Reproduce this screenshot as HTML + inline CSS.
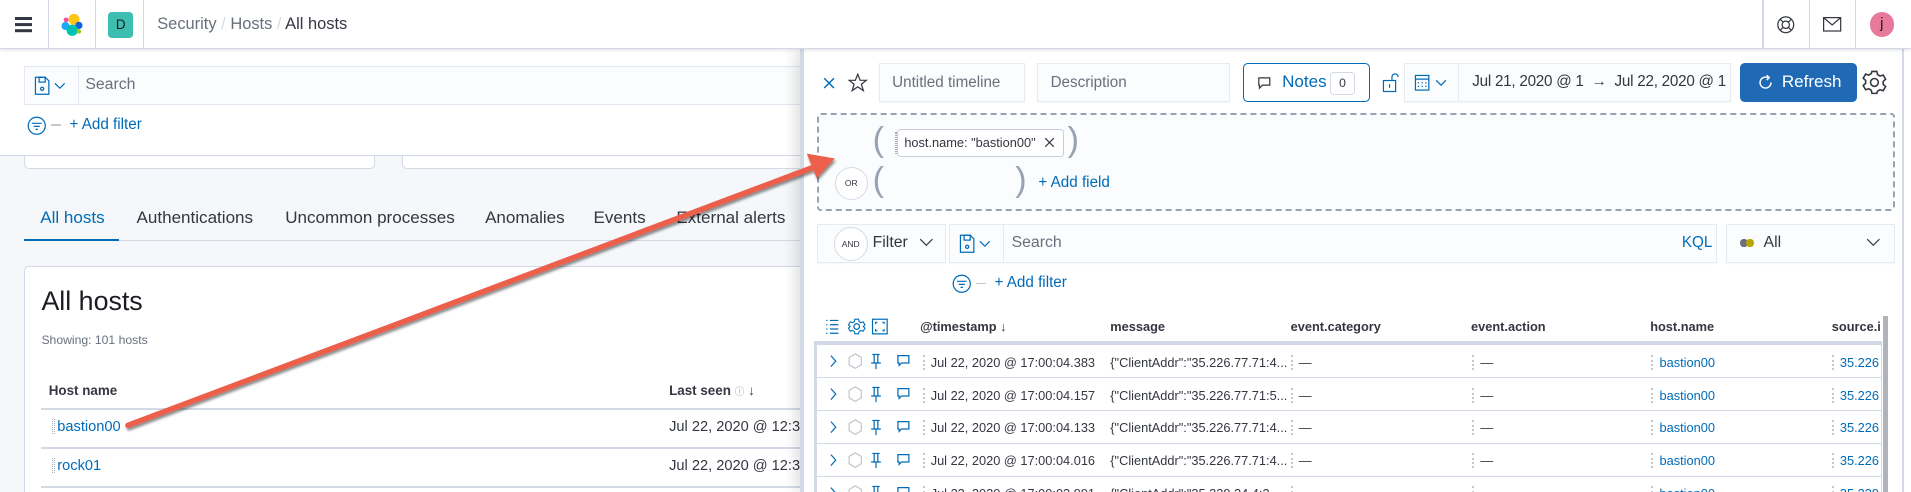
<!DOCTYPE html>
<html><head><meta charset="utf-8"><style>
*{box-sizing:border-box;margin:0;padding:0}
html,body{width:1911px;height:492px;overflow:hidden;background:#fafbfd}
#root{zoom:1.21875;width:1568px;height:404px;position:relative;overflow:hidden;font-family:"Liberation Sans",Arial,sans-serif;color:#343741;background:#f5f7fa}
.a{position:absolute;white-space:nowrap}
.blue{color:#006bb8}
.hdr{left:0;top:0;width:1568px;height:40px;background:#fff;border-bottom:1px solid #d3dae6;box-shadow:0 1px 3px rgba(0,0,0,.12);z-index:5}
.vl{position:absolute;top:0;width:1px;height:40px;background:#d3dae6}
.inp{position:absolute;background:#fbfcfd;border:1px solid #e6eaf1;box-shadow:0 1px 1px rgba(0,0,0,.04)}
.row{position:absolute;left:670px;width:873px;height:27px;border-bottom:1px solid #d3dae6;font-size:10.5px;background:#fff}
.row span{position:absolute;top:8px}
.row .h{padding-left:5px;border-left:2px dotted #c2c7cf}
.row svg{position:absolute;left:8px;top:6px}
.hd{position:absolute;left:1px;top:0;width:2px;height:12px;border-left:1px dotted #aab;border-right:1px dotted #aab}
</style></head><body><div id="root">

<!-- left page -->
<div class="a" style="left:0;top:40px;width:657px;height:88px;background:#fff;border-bottom:1px solid #d3dae6"></div>
<div class="a" style="left:20px;top:54px;width:640px;height:32px;background:#fbfcfd;border:1px solid #e3e8f2"></div>
<div class="a" style="left:64px;top:54px;width:1px;height:32px;background:#e3e8f2"></div>
<svg class="a" style="left:27px;top:62px" width="30" height="16" viewBox="0 0 30 16"><path d="M2 1h8l3 3v11H2z" fill="none" stroke="#006bb8"/><rect x="5" y="1" width="5" height="4" fill="none" stroke="#006bb8"/><circle cx="7.5" cy="10.5" r="1.3" fill="none" stroke="#006bb8"/><path d="M18 6l4 4 4-4" fill="none" stroke="#006bb8"/></svg>
<div class="a" style="left:70px;top:62px;font-size:13px;color:#69707d">Search</div>
<svg class="a" style="left:22px;top:95px" width="16" height="16"><circle cx="8" cy="8" r="7" fill="none" stroke="#006bb8"/><path d="M4 6h8M5.5 8.5h5M7 11h2" stroke="#006bb8"/></svg>
<div class="a" style="left:42px;top:102px;width:8px;height:1px;background:#c2c7cf"></div>
<div class="a blue" style="left:57px;top:95px;font-size:12.5px">+ Add filter</div>
<div class="a" style="left:20px;top:128px;width:288px;height:11px;background:#fff;border:1px solid #d3dae6;border-top:none;border-radius:0 0 4px 4px"></div>
<div class="a" style="left:330px;top:128px;width:340px;height:11px;background:#fff;border:1px solid #d3dae6;border-top:none;border-radius:0 0 4px 4px"></div>
<div class="a" style="left:20px;top:197px;width:650px;height:1px;background:#d3dae6"></div>
<div class="a" style="left:20px;top:196px;width:78px;height:2px;background:#006bb8"></div>
<div class="a blue" style="left:33px;top:171px;font-size:14px">All hosts</div>
<div class="a" style="left:112px;top:171px;font-size:14px">Authentications</div>
<div class="a" style="left:234px;top:171px;font-size:14px">Uncommon processes</div>
<div class="a" style="left:398px;top:171px;font-size:14px">Anomalies</div>
<div class="a" style="left:487px;top:171px;font-size:14px">Events</div>
<div class="a" style="left:555px;top:171px;font-size:14px">External alerts</div>
<div class="a" style="left:20px;top:218px;width:660px;height:200px;background:#fff;border:1px solid #d3dae6;border-radius:4px"></div>
<div class="a" style="left:34px;top:235px;font-size:22px;color:#1a1c21">All hosts</div>
<div class="a" style="left:34px;top:273px;font-size:10px;color:#69707d">Showing: 101 hosts</div>
<div class="a" style="left:40px;top:314px;font-size:11px;font-weight:bold">Host name</div>
<div class="a" style="left:549px;top:314px;font-size:11px;font-weight:bold">Last seen <span style="font-size:8px;color:#98a2b3;font-weight:normal">ⓘ</span> <span style="font-weight:normal">↓</span></div>
<div class="a" style="left:34px;top:335px;width:640px;height:1px;background:#d3dae6"></div>
<div class="a" style="left:34px;top:367px;width:640px;height:1px;background:#d3dae6"></div>
<div class="a" style="left:34px;top:399px;width:640px;height:1px;background:#d3dae6"></div>
<div class="a" style="left:42px;top:344px"><div class="hd"></div></div>
<div class="a blue" style="left:47px;top:344px;font-size:12px">bastion00</div>
<div class="a" style="left:42px;top:376px"><div class="hd"></div></div>
<div class="a blue" style="left:47px;top:376px;font-size:12px">rock01</div>
<div class="a" style="left:549px;top:344px;font-size:12px">Jul 22, 2020 @ 12:3</div>
<div class="a" style="left:549px;top:376px;font-size:12px">Jul 22, 2020 @ 12:3</div>

<!-- flyout -->
<div class="a" style="left:656px;top:40px;width:912px;height:364px;background:#fff;border-left:4px solid #d3dae6;box-shadow:-4px 0 10px rgba(0,0,0,.12);z-index:1"></div>
<div class="a" style="left:1561px;top:40px;width:1px;height:364px;background:#d3dae6;z-index:2"></div>
<div style="position:absolute;left:0;top:0;width:1568px;height:404px;z-index:3">
<svg class="a" style="left:675px;top:63px" width="10" height="10"><path d="M1 1l8 8M9 1l-8 8" stroke="#006bb8" stroke-width="1.2"/></svg>
<svg class="a" style="left:696px;top:60px" width="16" height="16"><path d="M8 1l2 5h5l-4 3.2 1.6 5.3L8 11.4 3.4 14.5 5 9.2 1 6h5z" fill="none" stroke="#343741"/></svg>
<div class="inp" style="left:721px;top:52px;width:120px;height:32px"></div>
<div class="a" style="left:732px;top:61px;font-size:12.5px;color:#69707d">Untitled timeline</div>
<div class="inp" style="left:851px;top:52px;width:158px;height:32px"></div>
<div class="a" style="left:862px;top:61px;font-size:12.5px;color:#69707d">Description</div>
<div class="a" style="left:1020px;top:52px;width:104px;height:32px;border:1px solid #006bb8;border-radius:4px;background:#fff"></div>
<svg class="a" style="left:1031px;top:62px" width="12" height="12"><path d="M1.5 1.5h9v6h-6l-2.5 2.5v-2.5h-.5z" fill="none" stroke="#343741"/></svg>
<div class="a blue" style="left:1052px;top:59px;font-size:14px">Notes</div>
<div class="a" style="left:1091px;top:59px;width:21px;height:19px;border:1px solid #d3dae6;border-radius:3px;font-size:10px;text-align:center;line-height:17px">0</div>
<svg class="a" style="left:1133px;top:59px" width="16" height="18"><rect x="2" y="7" width="10" height="9" fill="none" stroke="#006bb8"/><path d="M9 7V4a2.5 2.5 0 0 1 5 0" fill="none" stroke="#006bb8"/><path d="M7 10v3" stroke="#006bb8"/></svg>
<div class="inp" style="left:1152px;top:52px;width:268px;height:32px"></div>
<div class="a" style="left:1196px;top:52px;width:1px;height:32px;background:#e6eaf1"></div>
<svg class="a" style="left:1159px;top:60px" width="32" height="16"><rect x="2" y="2" width="11" height="12" fill="none" stroke="#006bb8"/><path d="M2 5h11M4 8h1M7 8h1M10 8h1M4 11h1M7 11h1M10 11h1" stroke="#006bb8"/><path d="M19 6l4 4 4-4" fill="none" stroke="#006bb8"/></svg>
<div class="a" style="left:1208px;top:60px;font-size:12.5px;letter-spacing:-.2px">Jul 21, 2020 @ 1 &nbsp;→ &nbsp;Jul 22, 2020 @ 1</div>
<div class="a" style="left:1428px;top:52px;width:96px;height:32px;background:#1f69b5;border-radius:4px"></div>
<svg class="a" style="left:1442px;top:61px" width="14" height="14"><path d="M11.5 7A4.5 4.5 0 1 1 9 3" fill="none" stroke="#fff" stroke-width="1.2"/><path d="M8 1l2 2-2 2" fill="none" stroke="#fff" stroke-width="1.2"/></svg>
<div class="a" style="left:1462px;top:59px;font-size:14px;color:#fff">Refresh</div>
<svg class="a" style="left:1527px;top:57px" width="22" height="22" viewBox="0 0 22 22"><path d="M9 2h4l.6 2.6 2 1.2 2.6-.8 2 3.4-2 1.8v2.4l2 1.8-2 3.4-2.6-.8-2 1.2L13 20H9l-.6-2.6-2-1.2-2.6.8-2-3.4 2-1.8V9.4l-2-1.8 2-3.4 2.6.8 2-1.2z" fill="none" stroke="#343741" stroke-width="1.3"/><circle cx="11" cy="11" r="3.2" fill="none" stroke="#343741" stroke-width="1.3"/></svg>

<div class="a" style="left:670px;top:93px;width:885px;height:80px;border:2px dashed #98a2b3;background:#fbfcfd;border-radius:3px"></div>
<div class="a" style="left:716px;top:99px;font-size:28px;color:#98a2b3;font-weight:100">(</div>
<div class="a" style="left:736px;top:106px;width:137px;height:23px;border:1px solid #c7cdd8;border-radius:3px;background:#fff"></div>
<div class="a" style="left:733px;top:108px"><div class="hd" style="height:18px"></div></div>
<div class="a" style="left:742px;top:111px;font-size:10.5px">host.name: "bastion00"</div>
<svg class="a" style="left:857px;top:112px" width="9" height="9"><path d="M1 1l7 7M8 1l-7 7" stroke="#343741"/></svg>
<div class="a" style="left:876px;top:99px;font-size:28px;color:#98a2b3">)</div>
<div class="a" style="left:685px;top:137px;width:27px;height:27px;border:1px solid #d3dae6;border-radius:50%;background:#fff;font-size:7px;text-align:center;line-height:26px">OR</div>
<div class="a" style="left:716px;top:132px;font-size:28px;color:#98a2b3">(</div>
<div class="a" style="left:833px;top:132px;font-size:28px;color:#98a2b3">)</div>
<div class="a blue" style="left:852px;top:143px;font-size:12.5px">+ Add field</div>

<div class="inp" style="left:670px;top:184px;width:106px;height:32px"></div>
<div class="a" style="left:684px;top:186px;width:28px;height:28px;border:1px solid #d3dae6;border-radius:50%;background:#fff;font-size:7px;text-align:center;line-height:27px">AND</div>
<div class="a" style="left:716px;top:192px;font-size:13px">Filter</div>
<svg class="a" style="left:754px;top:195px" width="12" height="8"><path d="M1 1l5 5 5-5" fill="none" stroke="#343741"/></svg>
<div class="inp" style="left:779px;top:184px;width:630px;height:32px"></div>
<div class="a" style="left:823px;top:184px;width:1px;height:32px;background:#e6eaf1"></div>
<svg class="a" style="left:786px;top:192px" width="30" height="16"><path d="M2 1h8l3 3v11H2z" fill="none" stroke="#006bb8"/><rect x="5" y="1" width="5" height="4" fill="none" stroke="#006bb8"/><circle cx="7.5" cy="10.5" r="1.3" fill="none" stroke="#006bb8"/><path d="M18 6l4 4 4-4" fill="none" stroke="#006bb8"/></svg>
<div class="a" style="left:830px;top:192px;font-size:13px;color:#69707d">Search</div>
<div class="a blue" style="left:1380px;top:192px;font-size:12.5px">KQL</div>
<div class="inp" style="left:1416px;top:184px;width:139px;height:32px"></div>
<div class="a" style="left:1428px;top:196px;width:6px;height:7px;border-radius:50%;background:#69707d"></div>
<div class="a" style="left:1433px;top:196px;width:6px;height:7px;border-radius:50%;background:#b9a500"></div>
<div class="a" style="left:1447px;top:192px;font-size:13px">All</div>
<svg class="a" style="left:1531px;top:195px" width="12" height="8"><path d="M1 1l5 5 5-5" fill="none" stroke="#343741"/></svg>
<svg class="a" style="left:781px;top:225px" width="16" height="16"><circle cx="8" cy="8" r="7" fill="none" stroke="#006bb8"/><path d="M4 6h8M5.5 8.5h5M7 11h2" stroke="#006bb8"/></svg>
<div class="a" style="left:801px;top:232px;width:8px;height:1px;background:#c2c7cf"></div>
<div class="a blue" style="left:816px;top:225px;font-size:12.5px">+ Add filter</div>

<!-- table -->
<svg class="a" style="left:677px;top:261px" width="54" height="14"><path d="M1 2h1M4 2h7M1 5.5h1M4 5.5h7M1 9h1M4 9h7M1 12.5h1M4 12.5h7" stroke="#006bb8"/><circle cx="26" cy="7" r="2.3" fill="none" stroke="#006bb8"/><path d="M24.5 1h3l.4 1.8 1.6 1 1.8-.6 1.5 2.5-1.4 1.3 1.4 1.3-1.5 2.5-1.8-.6-1.6 1-.4 1.8h-3l-.4-1.8-1.6-1-1.8.6-1.5-2.5 1.4-1.3-1.4-1.3 1.5-2.5 1.8.6 1.6-1z" fill="none" stroke="#006bb8" stroke-width=".9"/><rect x="39" y="1" width="12" height="12" fill="none" stroke="#006bb8"/><path d="M41.5 5V3.5H43M47 3.5h1.5V5M48.5 9v1.5H47M43 10.5h-1.5V9" fill="none" stroke="#006bb8" stroke-width=".9"/></svg>
<div class="a" style="left:755px;top:262px;font-size:10.5px;font-weight:bold">@timestamp <span style="font-weight:normal">↓</span></div>
<div class="a" style="left:911px;top:262px;font-size:10.5px;font-weight:bold">message</div>
<div class="a" style="left:1059px;top:262px;font-size:10.5px;font-weight:bold">event.category</div>
<div class="a" style="left:1207px;top:262px;font-size:10.5px;font-weight:bold">event.action</div>
<div class="a" style="left:1354px;top:262px;font-size:10.5px;font-weight:bold">host.name</div>
<div class="a" style="left:1503px;top:262px;font-size:10.5px;font-weight:bold">source.i</div>
<div class="a" style="left:668px;top:280px;width:876px;height:124px;background:#d3dae6"></div>
<div class="a" style="left:1545px;top:259px;width:4px;height:145px;background:#b0b4ba"></div>

<div class="row" style="top:283px"><svg width="72" height="15"><path d="M4 3l4 4.5-4 4.5" fill="none" stroke="#006bb8"/><path d="M24 1.5l5 3v6l-5 3-5-3v-6z" fill="none" stroke="#c2c7cf"/><path d="M38 2h6M39.5 2v7M42.5 2v7M37 9h8M41 9v5" fill="none" stroke="#006bb8"/><path d="M59 3h9v6h-6l-2 2v-2h-1z" fill="none" stroke="#006bb8"/></svg><span class="h" style="left:87px">Jul 22, 2020 @ 17:00:04.383</span><span style="left:241px">{"ClientAddr":"35.226.77.71:4...</span><span class="h" style="left:389px">—</span><span class="h" style="left:538px">—</span><span class="h blue" style="left:685px">bastion00</span><span class="h blue" style="left:833px">35.226</span></div>
<div class="row" style="top:310px"><svg width="72" height="15"><path d="M4 3l4 4.5-4 4.5" fill="none" stroke="#006bb8"/><path d="M24 1.5l5 3v6l-5 3-5-3v-6z" fill="none" stroke="#c2c7cf"/><path d="M38 2h6M39.5 2v7M42.5 2v7M37 9h8M41 9v5" fill="none" stroke="#006bb8"/><path d="M59 3h9v6h-6l-2 2v-2h-1z" fill="none" stroke="#006bb8"/></svg><span class="h" style="left:87px">Jul 22, 2020 @ 17:00:04.157</span><span style="left:241px">{"ClientAddr":"35.226.77.71:5...</span><span class="h" style="left:389px">—</span><span class="h" style="left:538px">—</span><span class="h blue" style="left:685px">bastion00</span><span class="h blue" style="left:833px">35.226</span></div>
<div class="row" style="top:337px"><svg width="72" height="15"><path d="M4 3l4 4.5-4 4.5" fill="none" stroke="#006bb8"/><path d="M24 1.5l5 3v6l-5 3-5-3v-6z" fill="none" stroke="#c2c7cf"/><path d="M38 2h6M39.5 2v7M42.5 2v7M37 9h8M41 9v5" fill="none" stroke="#006bb8"/><path d="M59 3h9v6h-6l-2 2v-2h-1z" fill="none" stroke="#006bb8"/></svg><span class="h" style="left:87px">Jul 22, 2020 @ 17:00:04.133</span><span style="left:241px">{"ClientAddr":"35.226.77.71:4...</span><span class="h" style="left:389px">—</span><span class="h" style="left:538px">—</span><span class="h blue" style="left:685px">bastion00</span><span class="h blue" style="left:833px">35.226</span></div>
<div class="row" style="top:364px"><svg width="72" height="15"><path d="M4 3l4 4.5-4 4.5" fill="none" stroke="#006bb8"/><path d="M24 1.5l5 3v6l-5 3-5-3v-6z" fill="none" stroke="#c2c7cf"/><path d="M38 2h6M39.5 2v7M42.5 2v7M37 9h8M41 9v5" fill="none" stroke="#006bb8"/><path d="M59 3h9v6h-6l-2 2v-2h-1z" fill="none" stroke="#006bb8"/></svg><span class="h" style="left:87px">Jul 22, 2020 @ 17:00:04.016</span><span style="left:241px">{"ClientAddr":"35.226.77.71:4...</span><span class="h" style="left:389px">—</span><span class="h" style="left:538px">—</span><span class="h blue" style="left:685px">bastion00</span><span class="h blue" style="left:833px">35.226</span></div>
<div class="row" style="top:391px"><svg width="72" height="15"><path d="M4 3l4 4.5-4 4.5" fill="none" stroke="#006bb8"/><path d="M24 1.5l5 3v6l-5 3-5-3v-6z" fill="none" stroke="#c2c7cf"/><path d="M38 2h6M39.5 2v7M42.5 2v7M37 9h8M41 9v5" fill="none" stroke="#006bb8"/><path d="M59 3h9v6h-6l-2 2v-2h-1z" fill="none" stroke="#006bb8"/></svg><span class="h" style="left:87px">Jul 22, 2020 @ 17:00:03.991</span><span style="left:241px">{"ClientAddr":"35.239.24.4:3...</span><span class="h" style="left:389px">—</span><span class="h" style="left:538px">—</span><span class="h blue" style="left:685px">bastion00</span><span class="h blue" style="left:833px">35.239</span></div>
</div>

<!-- header -->
<div class="a hdr">
<div class="a" style="left:12px;top:14px;width:14px;height:2px;background:#343741;box-shadow:0 5px 0 #343741,0 10px 0 #343741"></div>
<div class="vl" style="left:39px"></div><div class="vl" style="left:78px"></div><div class="vl" style="left:117px"></div>
<svg class="a" style="left:49px;top:10px" width="20" height="21"><circle cx="11.5" cy="6" r="4.5" fill="#fec514"/><circle cx="5" cy="6.5" r="2" fill="#f04e98"/><circle cx="4.5" cy="11.5" r="3.3" fill="#1ba9f5"/><circle cx="15.5" cy="11" r="3" fill="#0b64dd"/><circle cx="10" cy="15" r="4.6" fill="#00bfb3"/><circle cx="15.5" cy="16" r="1.8" fill="#93c90e"/></svg>
<div class="a" style="left:89px;top:10px;width:20px;height:21px;background:#3ebeb0;border-radius:3px;font-size:11px;text-align:center;line-height:21px;color:#1a1c21">D</div>
<div class="a" style="left:129px;top:12px;font-size:13.5px;color:#69707d">Security <span style="color:#d3dae6">/</span> Hosts <span style="color:#d3dae6">/</span> <span style="color:#343741">All hosts</span></div>
<div class="vl" style="left:1446px"></div><div class="vl" style="left:1484px"></div><div class="vl" style="left:1522px"></div>
<svg class="a" style="left:1457px;top:12px" width="16" height="16"><circle cx="8" cy="8" r="6.5" fill="none" stroke="#343741"/><circle cx="8" cy="8" r="3" fill="none" stroke="#343741"/><path d="M3.5 3.5l2.4 2.4M12.5 3.5l-2.4 2.4M3.5 12.5l2.4-2.4M12.5 12.5l-2.4-2.4" stroke="#343741"/></svg>
<svg class="a" style="left:1496px;top:14px" width="15" height="12"><rect x=".5" y=".5" width="14" height="11" fill="none" stroke="#343741"/><path d="M.5 .5l7 6 7-6" fill="none" stroke="#343741"/></svg>
<div class="a" style="left:1534px;top:10px;width:20px;height:20px;border-radius:50%;background:#e7799b;font-size:12px;text-align:center;line-height:20px;color:#1a1c21">j</div>
</div>

<!-- arrow -->
<svg class="a" style="left:0;top:0;z-index:10" width="1568" height="404"><defs><filter id="s" x="-5%" y="-5%" width="110%" height="110%"><feDropShadow dx="1" dy="2" stdDeviation="1.2" flood-opacity=".45"/></filter></defs><g filter="url(#s)"><line x1="105" y1="349" x2="668" y2="137" stroke="#ec5e4c" stroke-width="4.5" stroke-linecap="round"/><path d="M685 130L662 126 670 146z" fill="#ec5e4c"/></g></svg>
</div></body></html>
